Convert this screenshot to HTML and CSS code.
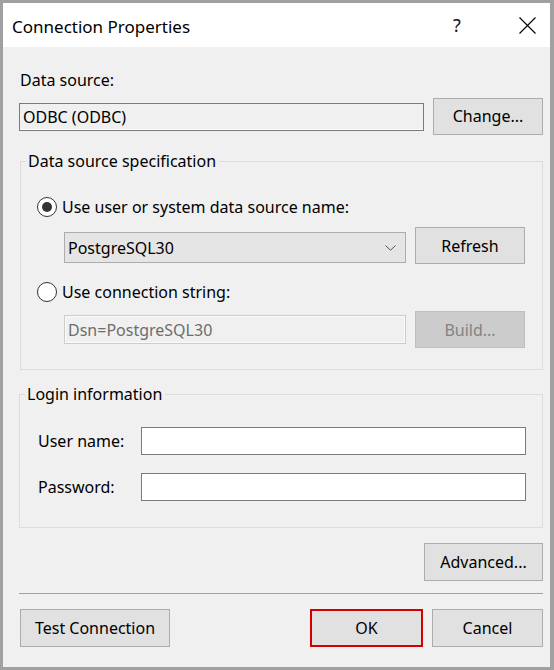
FILE: index.html
```html
<!DOCTYPE html>
<html>
<head>
<meta charset="utf-8">
<link rel="stylesheet" href="styles.css">
</head>
<body>
<div class="window">
  <div class="titlebar">
    <div class="title">Connection Properties</div>
    <div class="help">?</div>
    <div class="close">
      <svg width="17" height="17" viewBox="0 0 17 17"><path d="M0.5 0.5L16.5 16.5M16.5 0.5L0.5 16.5" stroke="#000" stroke-width="1.1" fill="none"/></svg>
    </div>
  </div>
  <div class="content">
    <div class="label-top">Data source:</div>
    <div class="row-source">
      <div class="textbox readonly">ODBC (ODBC)</div>
      <div class="btn btn-change">Change...</div>
    </div>

    <fieldset class="group group-spec">
      <legend>Data source specification</legend>
      <div class="radio-row first">
        <span class="radio checked"></span>
        <span class="radio-label">Use user or system data source name:</span>
      </div>
      <div class="ctrl-row">
        <div class="combo">
          <span>PostgreSQL30</span>
          <svg class="chev" width="11" height="6" viewBox="0 0 11 6"><path d="M0.5 0.5L5.5 5.2L10.5 0.5" stroke="#505050" stroke-width="1" fill="none"/></svg>
        </div>
        <div class="btn btn-side">Refresh</div>
      </div>
      <div class="radio-row second">
        <span class="radio"></span>
        <span class="radio-label">Use connection string:</span>
      </div>
      <div class="ctrl-row ctrl-row-2">
        <div class="textbox disabled">Dsn=PostgreSQL30</div>
        <div class="btn btn-side btn-disabled">Build...</div>
      </div>
    </fieldset>

    <fieldset class="group group-login">
      <legend>Login information</legend>
      <div class="field-row first">
        <span class="field-label">User name:</span>
        <div class="textbox field-input"></div>
      </div>
      <div class="field-row second">
        <span class="field-label">Password:</span>
        <div class="textbox field-input"></div>
      </div>
    </fieldset>

    <div class="row-advanced">
      <div class="btn btn-advanced">Advanced...</div>
    </div>
    <div class="separator"></div>
    <div class="row-bottom">
      <div class="btn btn-test">Test Connection</div>
      <div class="spacer"></div>
      <div class="btn btn-ok">OK</div>
      <div class="btn btn-cancel">Cancel</div>
    </div>
  </div>
</div>
</body>
</html>
```
FILE: styles.css
```css
* { box-sizing: border-box; }
html, body { margin: 0; padding: 0; }
body {
  width: 554px;
  height: 670px;
  overflow: hidden;
  font-family: "Noto Sans", "Open Sans", sans-serif;
  font-size: 16px;
  color: #000;
  background: #a0a0a0;
}
.window {
  width: 554px;
  height: 670px;
  border-style: solid;
  border-color: #a0a0a0;
  border-width: 3px 4px 3px 3px;
  background: #f0f0f0;
  display: flex;
  flex-direction: column;
}
.titlebar {
  height: 44px;
  background: #fff;
  display: flex;
  align-items: center;
  padding-left: 9px;
  flex-shrink: 0;
}
.title {
  font-size: 17px;
  flex: 1;
  margin-top: 2px;
}
.help {
  font-size: 18px;
  width: 20px;
  text-align: center;
  margin-right: 52px;
  margin-top: -1px;
  color: #111;
}
.close {
  width: 17px;
  height: 17px;
  margin-right: 14px;
  margin-top: 1px;
}
.close svg { display: block; }

.content {
  flex: 1;
  padding: 0 7px 0 16px;
  display: flex;
  flex-direction: column;
  line-height: 20px;
}
.label-top {
  margin-top: 23px;
  margin-left: 1px;
}
.row-source {
  margin-top: 8px;
  display: flex;
  align-items: center;
  height: 37px;
}
.textbox {
  border: 1px solid #7a7a7a;
  display: flex;
  align-items: center;
  padding-left: 3px;
  white-space: nowrap;
}
.readonly {
  width: 405px;
  height: 28px;
  background: #f0f0f0;
  box-shadow: inset 0 -1px 0 #fff;
}
.btn {
  background: #e1e1e1;
  border: 1px solid #adadad;
  display: flex;
  align-items: center;
  justify-content: center;
  height: 37px;
  white-space: nowrap;
}
.btn-change {
  width: 110px;
  margin-left: 9px;
  padding-bottom: 1px;
}

.group {
  margin: 0;
  padding: 0;
  border: 1px solid #dcdcdc;
  min-width: 0;
}
.group legend {
  padding: 0 3px 0 2px;
  margin-left: 5px;
  line-height: 20px;
}
.group-spec {
  margin-top: 16px;
  margin-left: 1px;
  padding-bottom: 21px;
}
.radio-row {
  display: flex;
  align-items: center;
  height: 20px;
  padding-left: 16px;
}
.radio-row.first { margin-top: 26px; }
.radio-row.second { margin-top: 18px; }
.radio {
  width: 20px;
  height: 20px;
  border: 1px solid #333;
  border-radius: 50%;
  background: #fff;
  display: flex;
  align-items: center;
  justify-content: center;
  flex-shrink: 0;
}
.radio.checked::after {
  content: "";
  width: 10px;
  height: 10px;
  border-radius: 50%;
  background: #333;
}
.radio-label {
  margin-left: 5px;
  margin-top: -1px;
}
.ctrl-row {
  display: flex;
  align-items: center;
  height: 37px;
  margin-top: 10px;
  padding-left: 43px;
}
.ctrl-row-2 { margin-top: 9px; }
.combo {
  width: 342px;
  height: 31px;
  margin-top: 4px;
  background: #e5e5e5;
  border: 1px solid #adadad;
  display: flex;
  align-items: center;
  padding-left: 3px;
  padding-right: 9px;
}
.combo span { flex: 1; }
.chev { display: block; }
.btn-side {
  width: 110px;
  margin-left: 9px;
}
.disabled {
  width: 342px;
  height: 29px;
  background: #f0f0f0;
  border-color: #cccccc;
  color: #6d6d6d;
  box-shadow: inset 0 0 0 1px #fafafa;
}
.btn-disabled {
  background: #cccccc;
  border-color: #bfbfbf;
  color: #838383;
}

.group-login {
  margin-top: 14px;
  padding-bottom: 26px;
}
.field-row {
  display: flex;
  align-items: center;
  height: 28px;
  padding-left: 18px;
  padding-right: 16px;
}
.field-row.first { margin-top: 23px; }
.field-row.second { margin-top: 18px; }
.field-label {
  width: 103px;
  flex-shrink: 0;
}
.field-input {
  flex: 1;
  height: 28px;
  background: #fff;
}

.row-advanced {
  display: flex;
  justify-content: flex-end;
  margin-top: 15px;
}
.btn-advanced {
  width: 119px;
  height: 38px;
}
.separator {
  margin-top: 12px;
  height: 1px;
  background: #a0a0a0;
}
.row-bottom {
  display: flex;
  align-items: center;
  margin-top: 15px;
}
.btn-test {
  width: 150px;
  height: 38px;
  margin-left: 1px;
}
.spacer { flex: 1; }
.btn-ok {
  width: 113px;
  height: 38px;
  border: 2px solid #d40000;
}
.btn-cancel {
  width: 111px;
  height: 38px;
  margin-left: 9px;
}
```
